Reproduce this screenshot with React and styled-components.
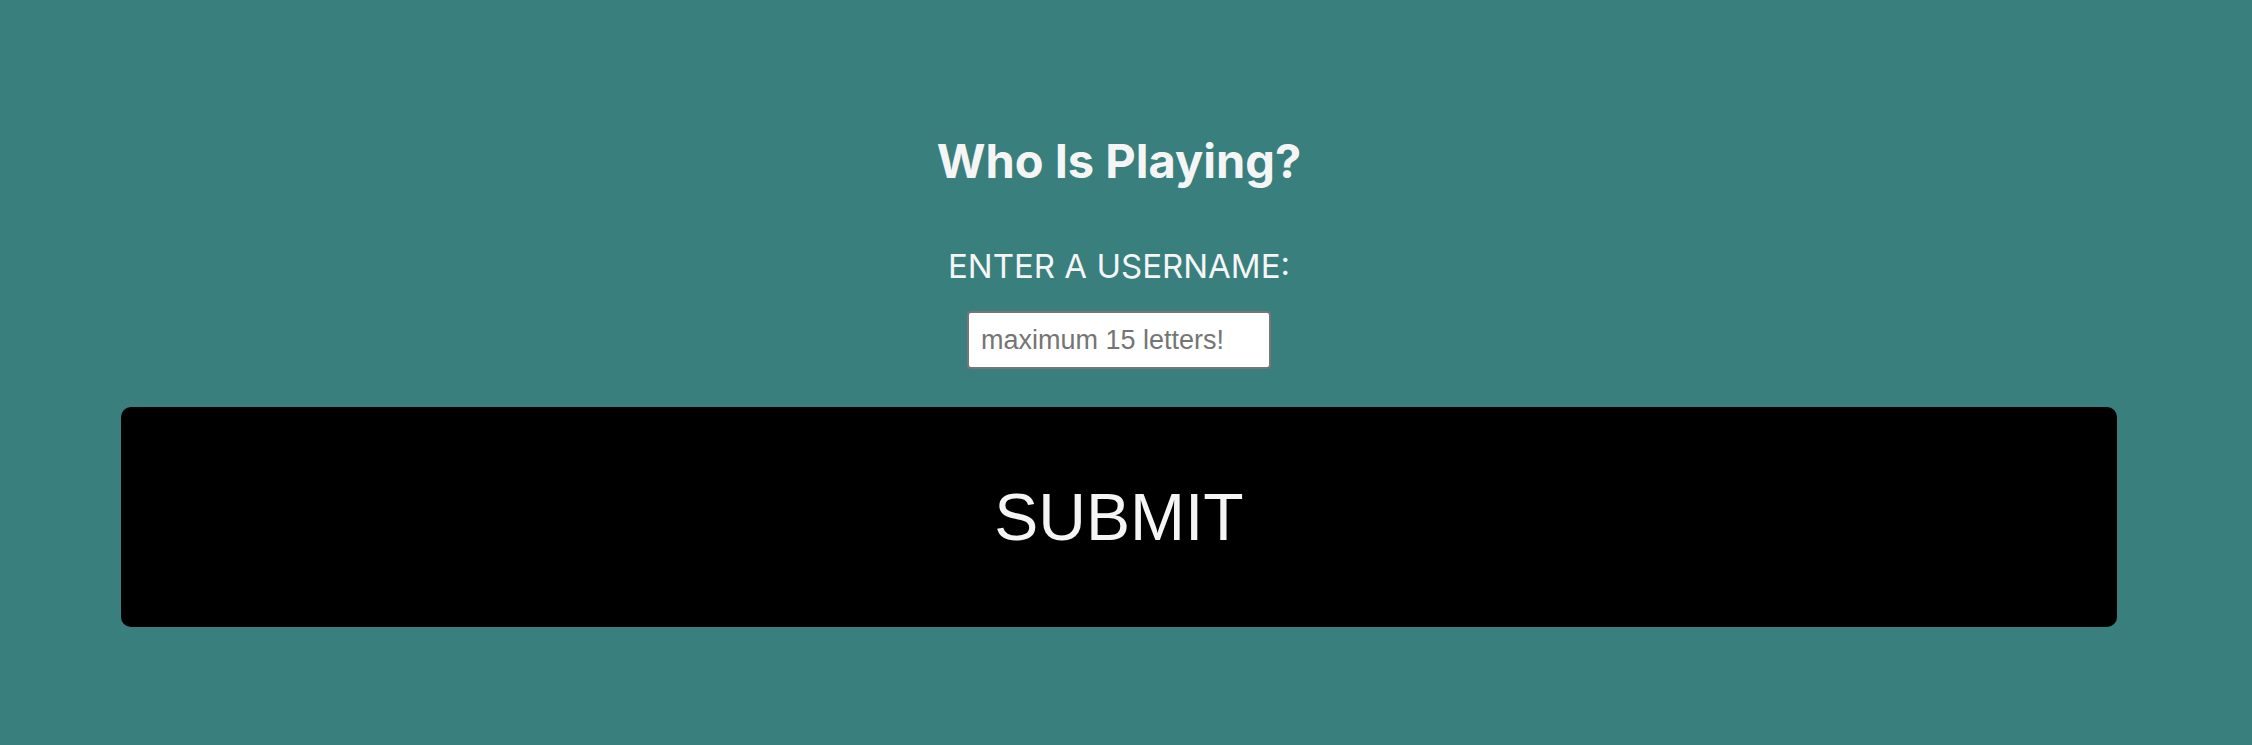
import React from "react";
import styled, { createGlobalStyle } from "styled-components";

const GlobalStyle = createGlobalStyle`
  html, body {
    margin: 0;
    padding: 0;
    background-color: #387f7d;
  }
`;

const Page = styled.div`
  box-sizing: border-box;
  width: 2238px;
  min-height: 745px;
  padding-top: 137px;
  display: flex;
  flex-direction: column;
  align-items: center;
  color: #f5f5f5;
`;

const Title = styled.h1`
  margin: 0;
  font-family: Inter, "Liberation Sans", sans-serif;
  font-size: 47px;
  line-height: 48px;
  font-weight: 700;
`;

const Label = styled.label`
  margin-top: 64px;
  font-family: Inter, "Liberation Sans", sans-serif;
  font-size: 33px;
  line-height: 34px;
  font-weight: 400;
`;

const Input = styled.input`
  box-sizing: border-box;
  margin-top: 28px;
  width: 304px;
  height: 58px;
  padding: 0 12px;
  border: 2px solid #767676;
  border-radius: 4px;
  background: #fff;
  font-family: "Liberation Sans", Arial, sans-serif;
  font-size: 27px;
  color: #222;

  &::placeholder {
    color: #757575;
  }
`;

const SubmitButton = styled.button`
  margin-top: 38px;
  width: 1996px;
  height: 220px;
  border: none;
  border-radius: 10px;
  background-color: #000;
  color: #f5f5f5;
  font-family: "Liberation Sans", Arial, sans-serif;
  font-size: 66px;
  cursor: pointer;
`;

const App = () => {
  return (
    <>
      <GlobalStyle />
      <Page>
        <Title>Who Is Playing?</Title>
        <Label htmlFor="username">ENTER A USERNAME:</Label>
        <Input id="username" type="text" placeholder="maximum 15 letters!" />
        <SubmitButton>SUBMIT</SubmitButton>
      </Page>
    </>
  );
};

export default App;
